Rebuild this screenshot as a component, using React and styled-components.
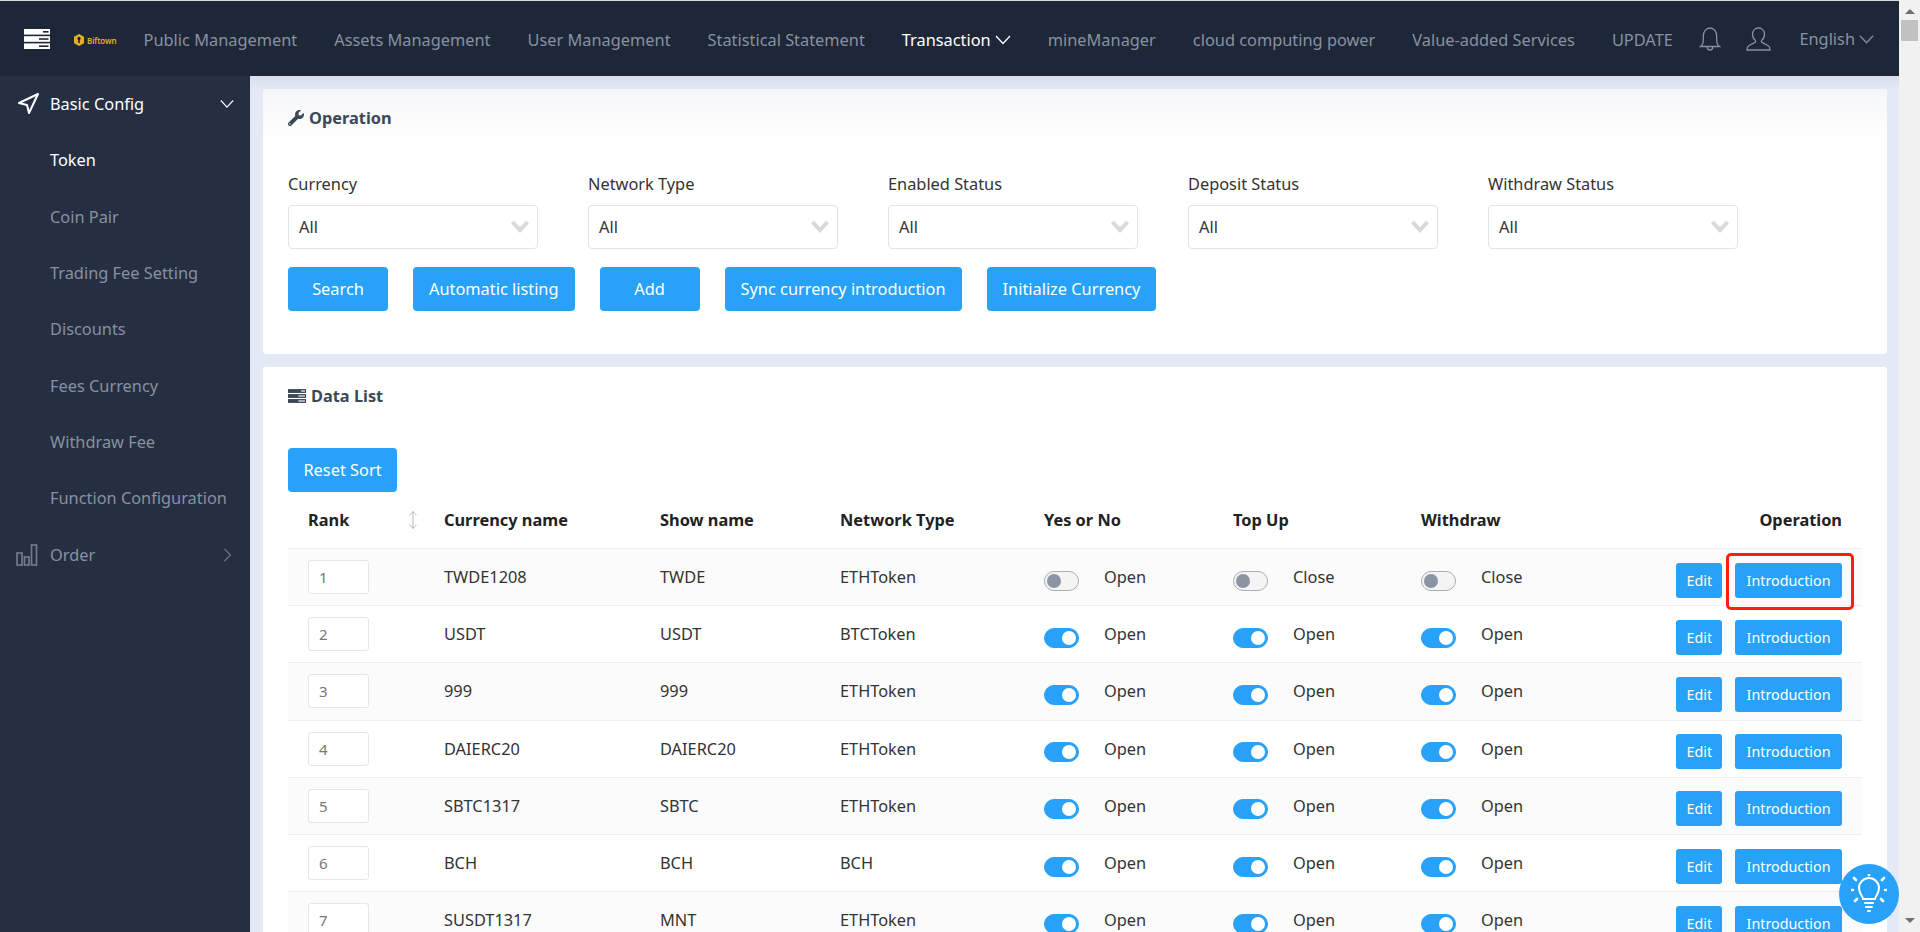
import React from 'react'
import styled, {createGlobalStyle} from 'styled-components'
import {Navigation, MoveVertical} from 'lucide-react'
import {FaWrench} from 'react-icons/fa'

const BLUE = '#27a2f8'
const TEXT_SIZE = '16.35px'

const GlobalStyle = createGlobalStyle`
    html, body {
        margin: 0;
        height: 100%;
        overflow: hidden;
    }
    body {
        font-family: "Noto Sans", "Open Sans", sans-serif;
        font-size: ${TEXT_SIZE};
        color: #333;
    }
    * {
        box-sizing: border-box;
    }
`
const Shell = styled.div`
    display: flex;
    height: 932px;
    overflow: hidden;
`
const Page = styled.div`
    display: flex;
    flex-direction: column;
    flex: 1;
    min-width: 0;
    background: #e3eaf5;
`
const Header = styled.header`
    display: flex;
    align-items: center;
    flex: none;
    height: 76px;
    padding: 0 25px 0 24px;
    background: #1e2737;
    border-top: 1px solid #d9d9d9;
`
const Logo = styled.div`
    display: flex;
    align-items: center;
    gap: 3px;
    margin: 3px 0 0 24px;
    color: #e2b021;
    font-size: 8px;
    font-weight: 600;
    letter-spacing: -.1px;
`
const Nav = styled.nav`
    display: flex;
    align-items: center;
    gap: 37px;
    margin-left: 27px;
    padding-top: 3px;
`
const NavItem = styled.a`
    display: flex;
    align-items: center;
    gap: 4px;
    color: ${props => (props.$active ? '#fff' : '#8791a1')};
    white-space: nowrap;
`
const HeaderRight = styled.div`
    display: flex;
    align-items: center;
    gap: 25px;
    margin-left: auto;
    color: #8791a1;
`
const English = styled.span`
    display: flex;
    align-items: center;
    gap: 4px;
    margin-left: 3px;
    padding-top: 1px;
`
const Body = styled.div`
    display: flex;
    flex: 1;
    min-height: 0;
`
const Sidebar = styled.aside`
    flex: none;
    width: 250px;
    background: #252f41;
`
const SideRow = styled.div`
    display: grid;
    grid-template-columns: 50px 1fr 30px;
    align-items: center;
    height: 56.3px;
    color: ${props => (props.$active ? '#fff' : '#8791a1')};
    white-space: nowrap;
`
const SideIcon = styled.span`
    display: flex;
    padding-left: 16px;
`
const Content = styled.main`
    position: relative;
    display: flex;
    flex-direction: column;
    gap: 13px;
    flex: 1;
    min-width: 0;
    padding: 13px 12px 0 13px;
    overflow: hidden;
    background: linear-gradient(#d8deea, #e3eaf5 13px);
`
const Card = styled.section`
    flex: none;
    background: #fff;
    border-radius: 4px;
`
const CardHeader = styled.h2`
    display: flex;
    align-items: center;
    gap: 5px;
    height: 58px;
    margin: 0;
    padding: 0 25px 1px;
    font-size: ${TEXT_SIZE};
    font-weight: 700;
    color: #3c4858;
    background: ${props => (props.$tinted ? 'linear-gradient(#f5f6f8, #fff)' : '#fff')};
    border-radius: 4px 4px 0 0;
`
const CardBody = styled.div`
    padding: ${props => props.$padding};
`
const Filters = styled.div`
    display: grid;
    grid-template-columns: repeat(5, 250px);
    column-gap: 50px;
`
const FilterLabel = styled.label`
    display: block;
    height: 24px;
    margin-bottom: 9px;
    line-height: 24px;
`
const Select = styled.div`
    display: flex;
    align-items: center;
    justify-content: space-between;
    height: 44px;
    padding: 0 8px 1px 10px;
    border: 1px solid #e3e3e3;
    border-radius: 4px;
`
const Actions = styled.div`
    display: flex;
    gap: 25px;
    margin-top: 18px;
`
const Button = styled.button`
    min-width: ${props => props.$minWidth};
    height: 44px;
    padding: 0 ${props => props.$padding || '16px'};
    font-family: inherit;
    font-size: ${TEXT_SIZE};
    color: #fff;
    background: ${BLUE};
    border: 0;
    border-radius: 4px;
`
const TableGrid = styled.div`
    display: grid;
    grid-template-columns: 136px 216px 180px 204px 189px 188px 150px 1fr;
    align-items: center;
    height: ${props => (props.$head ? '57px' : '57.2px')};
    font-weight: ${props => (props.$head ? 700 : 400)};
    color: ${props => (props.$head ? '#222' : '#333')};
    background: ${props => (props.$striped ? '#fbfbfb' : '#fff')};
    border-bottom: 1px solid #eee;
`
const Cell = styled.div`
    display: flex;
    align-items: center;
    justify-content: ${props => (props.$end ? 'flex-end' : 'flex-start')};
    gap: ${props => props.$gap || '0'};
    padding: ${props => (props.$end ? '0 20px 0 0' : '0 0 0 20px')};
`
const RankHead = styled(Cell)`
    justify-content: space-between;
    padding-right: 1px;
`
const RankInput = styled.input`
    width: 61px;
    height: 34px;
    padding: 0 10px;
    font-family: inherit;
    font-size: 15px;
    color: #777;
    background: #fff;
    border: 1px solid #e6e6e6;
    border-radius: 3px;
`
const Toggle = styled.span`
    position: relative;
    display: block;
    flex: none;
    width: 35px;
    height: 20px;
    margin-top: 7px;
    background: ${props => (props.$on ? BLUE : '#f4f4f4')};
    border: 1px solid ${props => (props.$on ? BLUE : '#a9aeb6')};
    border-radius: 10px;
    &::after {
        content: '';
        position: absolute;
        top: 2px;
        left: ${props => (props.$on ? '17px' : '2px')};
        width: 14px;
        height: 14px;
        background: ${props => (props.$on ? '#fff' : '#8a94a3')};
        border-radius: 50%;
    }
`
const SmallButton = styled.button`
    height: 35px;
    margin-top: 6px;
    padding: 0 ${props => props.$padding || '11.5px'};
    font-family: inherit;
    font-size: 14.3px;
    color: #fff;
    white-space: nowrap;
    background: ${BLUE};
    border: 0;
    border-radius: 3px;
`
const Highlighted = styled.span`
    position: relative;
    display: flex;
    &::after {
        content: '';
        position: absolute;
        inset: -4px -12px -12px -9px;
        border: 3px solid #ff1d0e;
        border-radius: 5px;
    }
`
const Fab = styled.div`
    position: absolute;
    right: 0;
    bottom: 8px;
    display: flex;
    align-items: center;
    justify-content: center;
    width: 60px;
    height: 60px;
    background: ${BLUE};
    border-radius: 50%;
`
const ScrollTrack = styled.div`
    display: flex;
    flex-direction: column;
    align-items: center;
    flex: none;
    width: 21px;
    padding-top: 9px;
    background: #f1f1f1;
`
const ScrollThumb = styled.div`
    width: 17px;
    height: 21px;
    margin-top: 6px;
    background: #c1c1c1;
`
const ScrollArrow = styled.div`
    width: 0;
    height: 0;
    border-left: 5px solid transparent;
    border-right: 5px solid transparent;
    border-${props => (props.$down ? 'top' : 'bottom')}: 5px solid #6f6f6f;
    ${props => props.$down && 'margin-top: auto; margin-bottom: 9px;'}
`

const ServerIcon = ({color, notch, width, height}) => (
    <svg width={width} height={height} viewBox="0 0 26 20">
        <rect y="0" width="26" height="5.6" fill={color} />
        <rect y="7.2" width="26" height="5.6" fill={color} />
        <rect y="14.4" width="26" height="5.6" fill={color} />
        <rect x="19" y="2" width="5.5" height="1.6" fill={notch} />
        <rect x="15" y="9.2" width="9.5" height="1.6" fill={notch} />
        <rect x="15" y="16.4" width="9.5" height="1.6" fill={notch} />
    </svg>
)
const ThinChevron = ({color, width, direction}) => (
    <svg width={width} height={width} viewBox="0 0 16 16" fill="none" stroke={color} strokeWidth="1.3">
        <polyline points={direction === 'right' ? '5,1 12,8 5,15' : '1,4 8,11.5 15,4'} />
    </svg>
)
const SelectChevron = () => (
    <svg width="18" height="13" viewBox="0 0 18 13" fill="none" stroke="#d9d9d9" strokeWidth="4">
        <polyline points="1.5,2 9,10 16.5,2" />
    </svg>
)
const BellIcon = () => (
    <svg width="22" height="24" viewBox="0 0 22 24" fill="none" stroke="#8791a1" strokeWidth="1.3">
        <path d="M1.5 19.5c2.2-1.6 2.8-3.6 2.8-7V9.2C4.3 4.6 7 1 11 1s6.7 3.600 6.700 8.200v3.300c0 3.400.6 5.400 2.800 7z" />
        <path d="M8.200 19.700c0 2 1.200 3.300 2.800 3.300s2.800-1.300 2.800-3.300" />
    </svg>
)
const UserIcon = () => (
    <svg width="25" height="24" viewBox="0 0 25 24" fill="none" stroke="#8791a1" strokeWidth="1.3">
        <path d="M12.500 1c-3.700 0-6 2.800-6 6.300 0 2.600 1.100 4.700 2.700 6 .5.500.5 1.600-.2 2.100L2.800 18.800C1.600 19.500 1 20.500 1 23h23c0-2.500-.6-3.500-1.800-4.200l-6.200-3.400c-.7-.5-.7-1.600-.2-2.100 1.600-1.300 2.700-3.400 2.700-6C18.500 3.800 16.200 1 12.500 1z" />
    </svg>
)
const BarsIcon = () => (
    <svg width="22" height="22" viewBox="0 0 22 22" fill="none" stroke="#6f7b8c" strokeWidth="1.7">
        <rect x="1" y="9" width="5" height="12" />
        <rect x="8.500" y="13" width="4.500" height="8" />
        <rect x="15.500" y="1" width="5" height="20" />
    </svg>
)
const CoinLogo = () => (
    <svg width="10" height="12" viewBox="0 0 10 12">
        <path d="M5 0l5 2.800v6.400L5 12 0 9.200V2.800z" fill="#e2b021" />
        <circle cx="5" cy="4.400" r="1.600" fill="#1e2737" />
        <rect x="4.200" y="5" width="1.600" height="4" fill="#1e2737" />
    </svg>
)
const BulbIcon = () => (
    <svg width="36" height="40" viewBox="0 0 36 40" fill="none" stroke="#fff" strokeWidth="2" strokeLinecap="round">
        <path d="M12 25c0-3-4-5-4-11a10 10 0 0 1 20 0c0 6-4 8-4 11z" />
        <path d="M14 29h8M15 33h6M17 37h2" />
        <path d="M18 0v1M3 4l2 2M33 4l-2 2M0 16h2M34 16h2M4 27l2-2M32 27l-2-2" strokeWidth="2.600" />
    </svg>
)

const NAV_ITEMS = ['Public Management', 'Assets Management', 'User Management', 'Statistical Statement']
const NAV_ITEMS_AFTER = ['mineManager', 'cloud computing power', 'Value-added Services', 'UPDATE']
const SIDE_ITEMS = ['Coin Pair', 'Trading Fee Setting', 'Discounts', 'Fees Currency', 'Withdraw Fee', 'Function Configuration']
const FILTERS = ['Currency', 'Network Type', 'Enabled Status', 'Deposit Status', 'Withdraw Status']
const ACTIONS = ['Automatic listing', 'Add', 'Sync currency introduction', 'Initialize Currency']
const ROWS = [
    {name: 'TWDE1208', show: 'TWDE', network: 'ETHToken'},
    {name: 'USDT', show: 'USDT', network: 'BTCToken'},
    {name: '999', show: '999', network: 'ETHToken'},
    {name: 'DAIERC20', show: 'DAIERC20', network: 'ETHToken'},
    {name: 'SBTC1317', show: 'SBTC', network: 'ETHToken'},
    {name: 'BCH', show: 'BCH', network: 'BCH'},
    {name: 'SUSDT1317', show: 'MNT', network: 'ETHToken'}
]

const Switch = ({on, label}) => (
    <Cell $gap="25px">
        <Toggle $on={on} />
        {label}
    </Cell>
)

const App = () => (
    <Shell>
        <GlobalStyle />
        <Page>
            <Header>
                <ServerIcon color="#fff" notch="#1e2737" width={26} height={20} />
                <Logo><CoinLogo />Biftown</Logo>
                <Nav>
                    {NAV_ITEMS.map(item => <NavItem key={item}>{item}</NavItem>)}
                    <NavItem $active>Transaction <ThinChevron color="#fff" width={16} /></NavItem>
                    {NAV_ITEMS_AFTER.map(item => <NavItem key={item}>{item}</NavItem>)}
                </Nav>
                <HeaderRight>
                    <BellIcon />
                    <UserIcon />
                    <English>English <ThinChevron color="#8791a1" width={15} /></English>
                </HeaderRight>
            </Header>
            <Body>
                <Sidebar>
                    <SideRow $active>
                        <SideIcon><Navigation size={24} strokeWidth={2} color="#fff" /></SideIcon>
                        Basic Config
                        <ThinChevron color="#fff" width={14} />
                    </SideRow>
                    <SideRow $active><span />Token</SideRow>
                    {SIDE_ITEMS.map(item => <SideRow key={item}><span />{item}</SideRow>)}
                    <SideRow>
                        <SideIcon><BarsIcon /></SideIcon>
                        Order
                        <ThinChevron color="#6f7b8c" width={14} direction="right" />
                    </SideRow>
                </Sidebar>
                <Content>
                    <Card>
                        <CardHeader $tinted><FaWrench size={16} color="#3c4858" />Operation</CardHeader>
                        <CardBody $padding="25px 25px 43px">
                            <Filters>
                                {FILTERS.map(filter => (
                                    <div key={filter}>
                                        <FilterLabel>{filter}</FilterLabel>
                                        <Select>All<SelectChevron /></Select>
                                    </div>
                                ))}
                            </Filters>
                            <Actions>
                                <Button $minWidth="100px">Search</Button>
                                {ACTIONS.map(action => (
                                    <Button key={action} $minWidth="100px">{action}</Button>
                                ))}
                            </Actions>
                        </CardBody>
                    </Card>
                    <Card>
                        <CardHeader><ServerIcon color="#3c4858" notch="#fff" width={18} height={14} />Data List</CardHeader>
                        <CardBody $padding="23px 25px 0">
                            <Button $minWidth="109px" $padding="12px">Reset Sort</Button>
                            <TableGrid $head>
                                <RankHead>Rank<MoveVertical size={20} strokeWidth={1} color="#aaa" /></RankHead>
                                <Cell>Currency name</Cell>
                                <Cell>Show name</Cell>
                                <Cell>Network Type</Cell>
                                <Cell>Yes or No</Cell>
                                <Cell>Top Up</Cell>
                                <Cell>Withdraw</Cell>
                                <Cell $end>Operation</Cell>
                            </TableGrid>
                            {ROWS.map((row, index) => (
                                <TableGrid key={row.name} $striped={index % 2 === 0}>
                                    <Cell><RankInput readOnly value={index + 1} /></Cell>
                                    <Cell>{row.name}</Cell>
                                    <Cell>{row.show}</Cell>
                                    <Cell>{row.network}</Cell>
                                    <Switch on={index !== 0} label="Open" />
                                    <Switch on={index !== 0} label={index === 0 ? 'Close' : 'Open'} />
                                    <Switch on={index !== 0} label={index === 0 ? 'Close' : 'Open'} />
                                    <Cell $end $gap="13px">
                                        <SmallButton $padding="10px">Edit</SmallButton>
                                        {index === 0
                                            ? <Highlighted><SmallButton>Introduction</SmallButton></Highlighted>
                                            : <SmallButton>Introduction</SmallButton>}
                                    </Cell>
                                </TableGrid>
                            ))}
                        </CardBody>
                    </Card>
                    <Fab><BulbIcon /></Fab>
                </Content>
            </Body>
        </Page>
        <ScrollTrack>
            <ScrollArrow />
            <ScrollThumb />
            <ScrollArrow $down />
        </ScrollTrack>
    </Shell>
)

export default App
